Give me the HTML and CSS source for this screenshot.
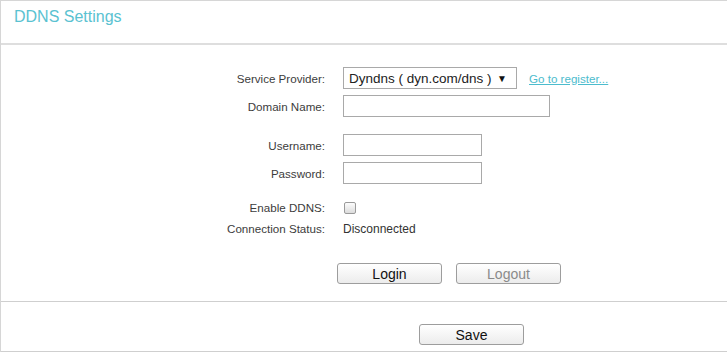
FILE: index.html
```html
<!DOCTYPE html>
<html lang="en">
<head>
    <meta charset="UTF-8">
    <title>DDNS Settings</title>
    <link rel="stylesheet" href="styles.css">
</head>
<body>
    <div class="page">
        <div class="header">
            <h2 class="title">DDNS Settings</h2>
        </div>

        <div class="form">
            <div class="row">
                <label class="label">Service Provider:</label>
                <div class="select">
                    <span>Dyndns ( dyn.com/dns )</span>
                    <span class="arrow">&#9660;</span>
                </div>
                <a class="link" href="#">Go to register...</a>
            </div>
            <div class="row">
                <label class="label">Domain Name:</label>
                <input class="text wide" type="text">
            </div>

            <div class="row group">
                <label class="label">Username:</label>
                <input class="text" type="text">
            </div>
            <div class="row">
                <label class="label">Password:</label>
                <input class="text" type="password">
            </div>

            <div class="row group small">
                <label class="label">Enable DDNS:</label>
                <span class="checkbox"></span>
            </div>
            <div class="row small">
                <label class="label">Connection Status:</label>
                <span class="value">Disconnected</span>
            </div>

            <div class="btn-row">
                <button class="btn">Login</button>
                <button class="btn disabled">Logout</button>
            </div>
        </div>

        <div class="footer">
            <button class="btn save">Save</button>
        </div>
    </div>
</body>
</html>
```

FILE: styles.css
```css
body {
    margin: 0;
    font-family: "Liberation Sans", Arial, sans-serif;
    font-size: 12px;
    color: #444;
    background: #fff;
}
.page {
    border-top: 1px solid #d6d6d6;
    border-left: 1px solid #d6d6d6;
}
.header {
    height: 42px;
    border-bottom: 2px solid #dedede;
}
.title {
    margin: 0;
    padding: 7px 0 0 13px;
    font-size: 16px;
    font-weight: normal;
    color: #5ac2d1;
}
.form {
    padding-top: 22px;
    height: 234px;
    border-bottom: 1px solid #cfcfcf;
}
.row {
    display: flex;
    align-items: center;
    height: 22px;
    margin-bottom: 6px;
}
.row.group {
    margin-top: 17px;
}
.row.small {
    height: 21px;
    margin-bottom: 0;
}
.row.group.small {
    margin-top: 13px;
}
.label {
    width: 324px;
    text-align: right;
    margin-right: 18px;
    font-size: 11.6px;
    color: #3c3c3c;
}
.select {
    box-sizing: border-box;
    width: 174px;
    height: 22px;
    border: 1px solid #a9a9a9;
    display: flex;
    align-items: center;
    justify-content: space-between;
    padding: 0 9px 0 5px;
    font-size: 13.5px;
    color: #222;
}
.arrow {
    font-size: 10px;
    color: #111;
}
.link {
    margin-left: 12px;
    font-size: 11.6px;
    color: #4cbccd;
}
.text {
    box-sizing: border-box;
    width: 139px;
    height: 22px;
    border: 1px solid #a9a9a9;
    padding: 0 4px;
    margin: 0;
}
.text.wide {
    width: 207px;
}
.checkbox {
    box-sizing: border-box;
    width: 12px;
    height: 12px;
    margin-left: 1px;
    border: 1px solid #9a9a9a;
    border-radius: 2px;
    background: linear-gradient(#fcfcfc, #dcdcdc);
}
.value {
    color: #333;
}
.btn-row {
    display: flex;
    gap: 14px;
    padding-left: 336px;
    margin-top: 24px;
}
.btn {
    box-sizing: border-box;
    width: 105px;
    height: 21px;
    border: 1px solid #9d9d9d;
    border-radius: 3px;
    background: linear-gradient(#ffffff, #ececec);
    font-family: "Liberation Sans", Arial, sans-serif;
    font-size: 14px;
    color: #111;
    padding: 0;
    cursor: pointer;
}
.btn.disabled {
    color: #8a8a8a;
    cursor: default;
}
.footer {
    height: 50px;
    border-bottom: 1px solid #cfcfcf;
    box-sizing: border-box;
    padding: 22px 0 0 418px;
}
```
